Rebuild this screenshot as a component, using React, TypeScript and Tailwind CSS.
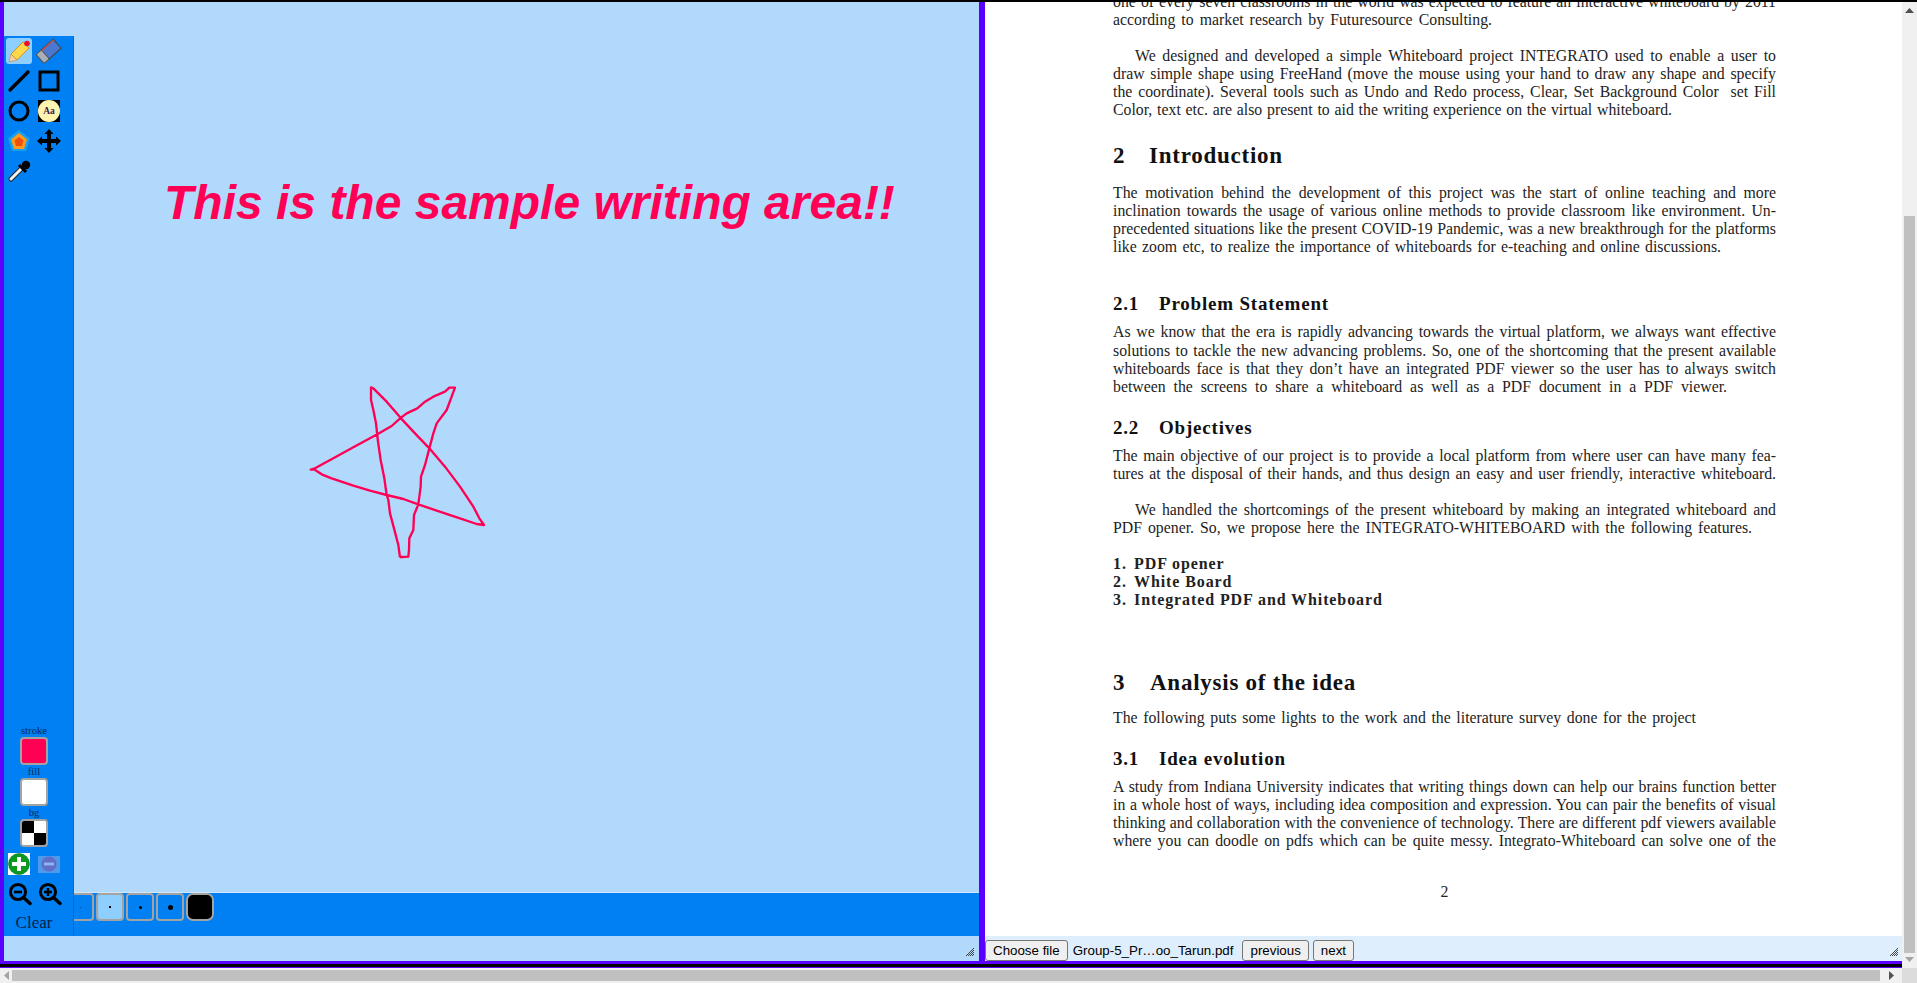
import React from 'react';

const J = ({ className = '', children }: { className?: string; children: React.ReactNode }) => (
  <div className={`[text-align-last:justify] whitespace-nowrap ${className}`}>{children}</div>
);

const Para = ({ className = '', children }: { className?: string; children: React.ReactNode }) => (
  <div className={`text-[15.8px] leading-[18.1px] text-[#222] ${className}`}>{children}</div>
);

const Heading = ({ className = '', num, gap, children }: { className?: string; num: string; gap: string; children: React.ReactNode }) => (
  <div className={`flex font-bold text-[#111] ${className}`}>
    <span className={gap}>{num}</span>
    <span>{children}</span>
  </div>
);

const Swatch = ({ children, className = '' }: { children?: React.ReactNode; className?: string }) => (
  <div className={`w-[28px] h-[28px] shrink-0 rounded-[4px] border-2 border-[#a3a3a3] overflow-hidden flex items-center justify-center ${className}`}>
    {children}
  </div>
);

const Label = ({ children }: { children: React.ReactNode }) => (
  <div className="text-[10.67px] leading-[13px] text-[#002a5c] text-center">{children}</div>
);

const Hatch = () => (
  <svg width="8" height="8" viewBox="0 0 8 8" className="block">
    <path d="M0 8 L8 0 M2 8 L8 2 M4 8 L8 4 M6 8 L8 6" stroke="#444" strokeWidth="1" />
  </svg>
);

const starPoints =
  '330,562 325,525 312,475 300,430 295,390 290,375 283,325 272,270 264,215 258,160 250,120 243,90 243,52 250,55 290,95 333,145 375,190 418,235 465,290 510,350 550,410 568,445 582,465 560,462 510,445 440,422 385,403 340,387 290,375 240,362 190,347 125,325 95,313 72,298 62,299 75,295 130,265 190,232 262,193 305,168 333,143 350,130 382,115 405,95 430,80 465,65 478,53 495,53 485,80 470,120 440,160 430,190 418,235 405,285 393,320 392,350 385,403 372,435 370,480 358,505 357,540 355,560 335,561 330,562';

const Tool = ({ children, active }: { children: React.ReactNode; active?: boolean }) => (
  <div className="w-[30px] h-[30px] flex items-center justify-center">
    <div className={`w-[26px] h-[26px] rounded-[3px] flex items-center justify-center ${active ? 'bg-[#8fcfff]' : ''}`}>{children}</div>
  </div>
);

const Sidebar = () => (
  <div className="w-[70px] shrink-0 mt-[34px] bg-[#0080f2] border-r border-[#4a5a6a] flex flex-col">
    <div className="grid grid-cols-[30px_30px] auto-rows-[30px]">
      <Tool active>
        <svg width="26" height="26" viewBox="0 0 26 26">
          <polygon points="3,24 5,16 11,22" fill="#f6cf9f" stroke="#b98a50" strokeWidth="0.6" />
          <polygon points="5,16 17,4 23,10 11,22" fill="#ffd84a" stroke="#d0962a" strokeWidth="1" />
          <circle cx="21" cy="5.5" r="2.8" fill="#e8112d" />
        </svg>
      </Tool>
      <Tool>
        <svg width="26" height="26" viewBox="0 0 26 26">
          <g transform="rotate(-42 13 13)">
            <rect x="7" y="7" width="17" height="12" fill="#4a78d0" stroke="#444" strokeWidth="1" />
            <rect x="1" y="7" width="7" height="12" rx="1.5" fill="#a9afb6" stroke="#555" strokeWidth="1" />
            <rect x="8" y="7" width="16" height="1.6" fill="#c0504a" />
          </g>
        </svg>
      </Tool>
      <Tool>
        <svg width="26" height="26" viewBox="0 0 26 26">
          <line x1="4" y1="22" x2="22" y2="4" stroke="#000" strokeWidth="3.4" strokeLinecap="round" />
        </svg>
      </Tool>
      <Tool>
        <svg width="26" height="26" viewBox="0 0 26 26">
          <rect x="4" y="4" width="18" height="18" fill="none" stroke="#000" strokeWidth="3" />
        </svg>
      </Tool>
      <Tool>
        <svg width="26" height="26" viewBox="0 0 26 26">
          <circle cx="13" cy="13" r="9" fill="none" stroke="#000" strokeWidth="3" />
        </svg>
      </Tool>
      <Tool>
        <div className="w-[22px] h-[22px] bg-black flex items-center justify-center">
          <div className="w-[22px] h-[22px] rounded-full bg-[#fff3b0] flex items-center justify-center text-[9.5px] font-bold text-[#332255] font-['Liberation_Serif',serif]">Aa</div>
        </div>
      </Tool>
      <Tool>
        <svg width="26" height="26" viewBox="0 0 26 26">
          <polygon points="13,2 24,10.5 20,23 6,23 2,10.5" fill="#18a0f0" />
          <polygon points="13,5 21,11.5 18,21 8,21 5,11.5" fill="#ff9a20" />
          <polygon points="13,9 17.5,12.5 16,18 10,18 8.5,12.5" fill="#f0500a" />
        </svg>
      </Tool>
      <Tool>
        <svg width="24" height="24" viewBox="0 0 24 24">
          <path d="M12 0 L16.5 5 L14 5 L14 10 L19 10 L19 7.5 L24 12 L19 16.5 L19 14 L14 14 L14 19 L16.5 19 L12 24 L7.5 19 L10 19 L10 14 L5 14 L5 16.5 L0 12 L5 7.5 L5 10 L10 10 L10 5 L7.5 5 Z" fill="#000" />
        </svg>
      </Tool>
      <Tool>
        <svg width="26" height="26" viewBox="0 0 26 26" className="-mt-[2px]">
          <line x1="5" y1="22" x2="15" y2="12" stroke="#222" strokeWidth="5" strokeLinecap="round" />
          <line x1="5" y1="22" x2="15" y2="12" stroke="#f2f2f2" strokeWidth="3" strokeLinecap="round" />
          <line x1="13" y1="8" x2="20" y2="15" stroke="#000" strokeWidth="3" />
          <circle cx="20" cy="8" r="4.2" fill="#000" />
        </svg>
      </Tool>
    </div>
    <div className="mt-auto w-[60px] flex flex-col items-center">
      <Label>stroke</Label>
      <Swatch className="bg-[#ff0055]" />
      <Label>fill</Label>
      <Swatch className="bg-white" />
      <Label>bg</Label>
      <Swatch className="bg-white">
        <div className="grid grid-cols-2 grid-rows-2 w-full h-full">
          <div className="bg-black" />
          <div className="bg-white" />
          <div className="bg-white" />
          <div className="bg-black" />
        </div>
      </Swatch>
    </div>
    <div className="grid grid-cols-[30px_30px] pl-[4px] mt-[6px] items-center">
      <div className="w-[22px] h-[22px] bg-white">
        <svg width="22" height="22" viewBox="0 0 22 22">
          <circle cx="11" cy="11" r="10.5" fill="#0a9a1e" stroke="#067012" strokeWidth="0.6" />
          <path d="M9 4 H13 V9 H18 V13 H13 V18 H9 V13 H4 V9 H9 Z" fill="#fff" />
        </svg>
      </div>
      <div className="w-[22px] h-[17px] bg-[#4f98ea] flex items-center justify-center">
        <svg width="16" height="16" viewBox="0 0 16 16">
          <circle cx="8" cy="8" r="7.6" fill="#5f6fc8" />
          <rect x="3" y="6.6" width="10" height="2.8" fill="#8fb8f0" />
        </svg>
      </div>
    </div>
    <div className="grid grid-cols-[30px_30px] pl-[4px] mt-[7px]">
      <svg width="24" height="24" viewBox="0 0 24 24">
        <circle cx="10" cy="10" r="7.6" fill="none" stroke="#000" strokeWidth="3" />
        <line x1="15.5" y1="15.5" x2="22" y2="21.5" stroke="#000" strokeWidth="3.4" strokeLinecap="round" />
        <rect x="6" y="8.7" width="8" height="2.6" fill="#000" />
      </svg>
      <svg width="24" height="24" viewBox="0 0 24 24">
        <circle cx="10" cy="10" r="7.6" fill="none" stroke="#000" strokeWidth="3" />
        <line x1="15.5" y1="15.5" x2="22" y2="21.5" stroke="#000" strokeWidth="3.4" strokeLinecap="round" />
        <path d="M8.7 6 H11.3 V8.7 H14 V11.3 H11.3 V14 H8.7 V11.3 H6 V8.7 H8.7 Z" fill="#000" />
      </svg>
    </div>
    <div className="w-[60px] text-center text-[17px] leading-[20px] text-[#00224d] mt-[7px] mb-[3px]">Clear</div>
  </div>
);

const SizeStrip = () => {
  const dots = [1, 2, 3, 5];
  return (
    <div className="h-[44px] shrink-0 bg-[#0080f2] border-t border-[#cfe6fb] flex gap-[2px] overflow-hidden">
      {dots.map((d, i) => (
        <Swatch key={d} className={`${i === 0 ? '-ml-[8px]' : ''} ${i === 1 ? 'bg-[#8fcfff]' : ''}`}>
          <div className={`${d === 1 ? 'w-[1px] h-[1px] bg-[#0b4f8f]' : d === 2 ? 'w-[2px] h-[2px] bg-black' : d === 3 ? 'w-[3px] h-[3px] rounded-full bg-black' : 'w-[5px] h-[5px] rounded-full bg-black'}`} />
        </Swatch>
      ))}
      <Swatch className="bg-black rounded-[7px] border-[#3f6f9f]" />
    </div>
  );
};

const Whiteboard = () => (
  <div className="relative w-[979px] shrink-0 border-l-4 border-[#5a00ff] bg-[#b1d9fc] flex pb-[25px]">
    <Sidebar />
    <div className="relative flex-1 flex flex-col">
      <div className="flex-1" />
      <SizeStrip />
      <div className="absolute left-[90px] top-[173px] whitespace-nowrap font-['Liberation_Sans',sans-serif] font-bold italic text-[48px] leading-[56px] text-[#ff0055]">
        This is the sample writing area!!
      </div>
      <svg className="absolute left-[216px] top-[368px]" width="220" height="200" viewBox="0 0 660 600">
        <polyline points={starPoints} fill="none" stroke="#ff0055" strokeWidth="7" strokeLinejoin="round" />
      </svg>
    </div>
    <div className="absolute right-[5px] bottom-[5px]"><Hatch /></div>
  </div>
);

const ListItem = ({ n, children }: { n: string; children: React.ReactNode }) => (
  <div className="flex text-[16px] tracking-[0.9px]">
    <span className="w-[21px]">{n}</span>
    <span>{children}</span>
  </div>
);

const PdfPage = () => (
  <div className="flex-1 overflow-hidden pl-[128px] font-['Liberation_Serif',serif]">
    <div className="w-[663px] -mt-[9.5px]">
      <Para>
        <J>one of every seven classrooms in the world was expected to feature an interactive whiteboard by 2011</J>
        <J className="w-[379px]">according to market research by Futuresource Consulting.</J>
      </Para>
      <Para className="mt-[18px]">
        <J><span className="pl-[22px]">We designed and developed a simple Whiteboard project INTEGRATO used to enable a user to</span></J>
        <J>draw simple shape using FreeHand (move the mouse using your hand to draw any shape and specify</J>
        <J>the coordinate). Several tools such as Undo and Redo process, Clear, Set Background Color&nbsp; set Fill</J>
        <J className="w-[559px]">Color, text etc. are also present to aid the writing experience on the virtual whiteboard.</J>
      </Para>
      <Heading num="2" gap="w-[36px]" className="mt-[24.5px] text-[23px] tracking-[0.75px] leading-[24px]">Introduction</Heading>
      <Para className="mt-[16.5px]">
        <J>The motivation behind the development of this project was the start of online teaching and more</J>
        <J>inclination towards the usage of various online methods to provide classroom like environment. Un-</J>
        <J>precedented situations like the present COVID-19 Pandemic, was a new breakthrough for the platforms</J>
        <J className="w-[608px]">like zoom etc, to realize the importance of whiteboards for e-teaching and online discussions.</J>
      </Para>
      <Heading num="2.1" gap="w-[46px]" className="mt-[37.5px] text-[19px] tracking-[0.8px] leading-[20px]">Problem Statement</Heading>
      <Para className="mt-[9.5px]">
        <J>As we know that the era is rapidly advancing towards the virtual platform, we always want effective</J>
        <J>solutions to tackle the new advancing problems. So, one of the shortcoming that the present available</J>
        <J>whiteboards face is that they don’t have an integrated PDF viewer so the user has to always switch</J>
        <J className="w-[614px]">between the screens to share a whiteboard as well as a PDF document in a PDF viewer.</J>
      </Para>
      <Heading num="2.2" gap="w-[46px]" className="mt-[22px] text-[19px] tracking-[0.8px] leading-[20px]">Objectives</Heading>
      <Para className="mt-[9.5px]">
        <J>The main objective of our project is to provide a local platform from where user can have many fea-</J>
        <J>tures at the disposal of their hands, and thus design an easy and user friendly, interactive whiteboard.</J>
      </Para>
      <Para className="mt-[17.5px]">
        <J><span className="pl-[22px]">We handled the shortcomings of the present whiteboard by making an integrated whiteboard and</span></J>
        <J className="w-[639px]">PDF opener. So, we propose here the INTEGRATO-WHITEBOARD with the following features.</J>
      </Para>
      <Para className="mt-[18px] font-bold">
        <ListItem n="1.">PDF opener</ListItem>
        <ListItem n="2.">White Board</ListItem>
        <ListItem n="3.">Integrated PDF and Whiteboard</ListItem>
      </Para>
      <Heading num="3" gap="w-[37px]" className="mt-[62px] text-[23px] tracking-[0.75px] leading-[24px]">Analysis of the idea</Heading>
      <Para className="mt-[13.5px]">
        <J className="w-[583px]">The following puts some lights to the work and the literature survey done for the project</J>
      </Para>
      <Heading num="3.1" gap="w-[46px]" className="mt-[22px] text-[19px] tracking-[0.8px] leading-[20px]">Idea evolution</Heading>
      <Para className="mt-[9px]">
        <J>A study from Indiana University indicates that writing things down can help our brains function better</J>
        <J>in a whole host of ways, including idea composition and expression. You can pair the benefits of visual</J>
        <J>thinking and collaboration with the convenience of technology. There are different pdf viewers available</J>
        <J>where you can doodle on pdfs which can be quite messy. Integrato-Whiteboard can solve one of the</J>
      </Para>
      <Para className="mt-[33px] text-center">2</Para>
    </div>
  </div>
);

const FileBar = () => {
  const btn = 'h-[21px] px-[7px] bg-[#efefef] border border-[#767676] rounded-[3px] text-[13.33px] leading-[19px] text-black';
  return (
    <div className="relative h-[25px] shrink-0 bg-[#dfeefc] flex items-end font-['Liberation_Sans',sans-serif]">
      <button className={btn}>Choose file</button>
      <span className="ml-[5px] text-[13.33px] leading-[21px] text-black">Group-5_Pr…oo_Tarun.pdf</span>
      <button className={`${btn} ml-[9px]`}>previous</button>
      <button className={`${btn} ml-[4px]`}>next</button>
      <div className="absolute right-[4px] bottom-[5px]"><Hatch /></div>
    </div>
  );
};

const VScroll = () => (
  <div className="w-[15px] shrink-0 bg-[#f0f0f0] relative flex flex-col items-center">
    <svg width="9" height="5" viewBox="0 0 9 5" className="mt-[6px]"><polygon points="4.5,0 9,5 0,5" fill="#505050" /></svg>
    <div className="w-[11px] h-[737px] bg-[#c0c0c0] mt-[203px]" />
    <svg width="9" height="5" viewBox="0 0 9 5" className="mt-[4px]"><polygon points="0,0 9,0 4.5,5" fill="#a3a3a3" /></svg>
  </div>
);

const HScroll = () => (
  <div className="h-[15px] shrink-0 flex bg-[#f0f0f0]">
    <div className="flex-1 flex items-center">
      <div className="w-[12px] flex justify-center">
        <svg width="5" height="9" viewBox="0 0 5 9"><polygon points="5,0 5,9 0,4.5" fill="#a3a3a3" /></svg>
      </div>
      <div className="w-[1868px] h-[11px] bg-[#c0c0c0]" />
      <div className="flex-1 flex justify-center">
        <svg width="5" height="9" viewBox="0 0 5 9"><polygon points="0,0 5,4.5 0,9" fill="#505050" /></svg>
      </div>
    </div>
    <div className="w-[15px] bg-[#dcdcdc]" />
  </div>
);

export default function App() {
  return (
    <div className="w-[1917px] h-[983px] overflow-hidden flex flex-col bg-white font-['Liberation_Serif',serif]">
      <div className="h-[2px] shrink-0 bg-black" />
      <div className="flex-1 flex min-h-0">
        <div className="flex-1 flex flex-col min-w-0">
          <div className="flex-1 flex min-h-0">
            <Whiteboard />
            <div className="w-[6px] shrink-0 bg-[#5a00ff]" />
            <div className="flex-1 flex flex-col min-w-0 bg-white">
              <PdfPage />
              <FileBar />
            </div>
          </div>
          <div className="h-[3px] shrink-0 bg-[#5a00ff]" />
          <div className="h-[3px] shrink-0 bg-black" />
          <div className="h-px shrink-0 bg-[#5a00ff]" />
        </div>
        <VScroll />
      </div>
      <HScroll />
    </div>
  );
}
